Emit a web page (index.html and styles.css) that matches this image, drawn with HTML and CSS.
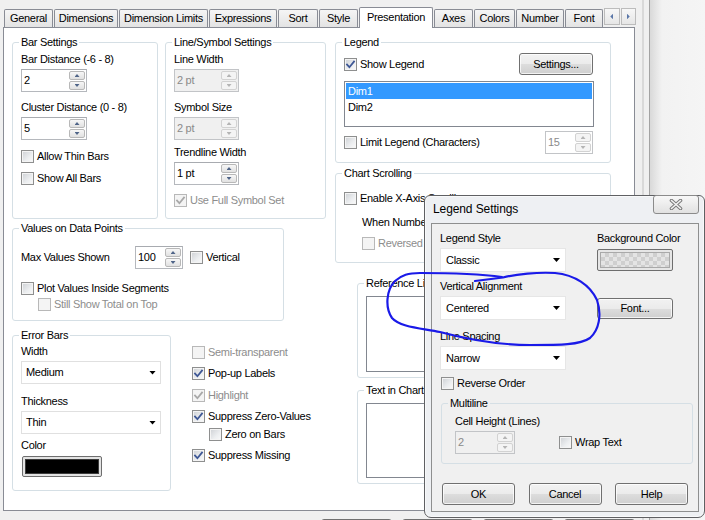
FILE: index.html
```html
<!DOCTYPE html>
<html>
<head>
<meta charset="utf-8">
<title>Chart Properties - Presentation</title>
<link rel="stylesheet" href="styles.css">
</head>
<body>
<div class="screen">
  <div class="window">
    <div class="tabs">
      <div class="tab">General</div>
      <div class="tab">Dimensions</div>
      <div class="tab">Dimension Limits</div>
      <div class="tab">Expressions</div>
      <div class="tab">Sort</div>
      <div class="tab">Style</div>
      <div class="tab sel">Presentation</div>
      <div class="tab">Axes</div>
      <div class="tab">Colors</div>
      <div class="tab">Number</div>
      <div class="tab">Font</div>
      <div class="tabscroll"><span class="ts ts-left"></span><span class="ts ts-right"></span></div>
    </div>

    <div class="panel">
      <div class="left">
        <div class="row-top">
          <div class="group g-bar">
            <div class="gt">Bar Settings</div>
            <div class="mt4">Bar Distance (-6 - 8)</div>
            <div class="spin w66 mt3"><span class="sv">2</span><span class="sb"><i class="up"></i><i class="dn"></i></span></div>
            <div class="mt9">Cluster Distance (0 - 8)</div>
            <div class="spin w66 mt3"><span class="sv">5</span><span class="sb"><i class="up"></i><i class="dn"></i></span></div>
            <div class="chk mt10"><span class="cb"></span>Allow Thin Bars</div>
            <div class="chk mt9"><span class="cb"></span>Show All Bars</div>
          </div>
          <div class="group g-line">
            <div class="gt">Line/Symbol Settings</div>
            <div class="mt4">Line Width</div>
            <div class="spin off w65 mt3"><span class="sv">2 pt</span><span class="sb"><i class="up"></i><i class="dn"></i></span></div>
            <div class="mt9">Symbol Size</div>
            <div class="spin off w65 mt3"><span class="sv">2 pt</span><span class="sb"><i class="up"></i><i class="dn"></i></span></div>
            <div class="mt6">Trendline Width</div>
            <div class="spin w65 mt3"><span class="sv">1 pt</span><span class="sb"><i class="up"></i><i class="dn"></i></span></div>
            <div class="chk dis mt9"><span class="cb on"><svg viewBox="0 0 11 11"><path d="M2 5.6 4.4 8.2 9 2.6"/></svg></span>Use Full Symbol Set</div>
          </div>
        </div>

        <div class="group g-values">
          <div class="gt">Values on Data Points</div>
          <div class="vrow">
            <span class="w114">Max Values Shown</span>
            <div class="spin w48"><span class="sv">100</span><span class="sb"><i class="up"></i><i class="dn"></i></span></div>
            <div class="chk ml7"><span class="cb"></span>Vertical</div>
          </div>
          <div class="chk mt13"><span class="cb"></span>Plot Values Inside Segments</div>
          <div class="chk dis mt3 ml17"><span class="cb"></span>Still Show Total on Top</div>
        </div>

        <div class="row-bottom">
          <div class="group g-error">
            <div class="gt">Error Bars</div>
            <div class="mt3">Width</div>
            <div class="dd w140 mt3"><span>Medium</span><span class="arr"></span></div>
            <div class="mt11">Thickness</div>
            <div class="dd w140 mt3"><span>Thin</span><span class="arr"></span></div>
            <div class="mt5">Color</div>
            <div class="swatch mt4"><span class="swatch-in"></span></div>
          </div>
          <div class="checks">
            <div class="chk dis"><span class="cb"></span>Semi-transparent</div>
            <div class="chk mt8"><span class="cb on"><svg viewBox="0 0 11 11"><path d="M2 5.6 4.4 8.2 9 2.6"/></svg></span>Pop-up Labels</div>
            <div class="chk dis mt9"><span class="cb on"><svg viewBox="0 0 11 11"><path d="M2 5.6 4.4 8.2 9 2.6"/></svg></span>Highlight</div>
            <div class="chk mt8"><span class="cb on"><svg viewBox="0 0 11 11"><path d="M2 5.6 4.4 8.2 9 2.6"/></svg></span>Suppress Zero-Values</div>
            <div class="chk mt5 ml17"><span class="cb"></span>Zero on Bars</div>
            <div class="chk mt8"><span class="cb on"><svg viewBox="0 0 11 11"><path d="M2 5.6 4.4 8.2 9 2.6"/></svg></span>Suppress Missing</div>
          </div>
        </div>
      </div>

      <div class="right">
        <div class="group g-legend">
          <div class="gt">Legend</div>
          <div class="legend-top">
            <div class="chk"><span class="cb on"><svg viewBox="0 0 11 11"><path d="M2 5.6 4.4 8.2 9 2.6"/></svg></span>Show Legend</div>
            <div class="btn btn-settings">Settings...</div>
          </div>
          <div class="list list-legend">
            <div class="li sel">Dim1</div>
            <div class="li">Dim2</div>
          </div>
          <div class="limit-row">
            <div class="chk"><span class="cb"></span>Limit Legend (Characters)</div>
            <div class="spin ro w48"><span class="sv">15</span><span class="sb"><i class="up"></i><i class="dn"></i></span></div>
          </div>
        </div>

        <div class="group g-scroll">
          <div class="gt">Chart Scrolling</div>
          <div class="chk mt12"><span class="cb"></span>Enable X-Axis Scrollbar</div>
          <div class="vrow mt6 ml18">
            <span class="w150">When Number of Items Exceeds:</span>
            <div class="spin ro w48"><span class="sv">10</span><span class="sb"><i class="up"></i><i class="dn"></i></span></div>
          </div>
          <div class="chk dis mt3 ml18"><span class="cb"></span>Reversed</div>
        </div>

        <div class="group g-ref">
          <div class="gt">Reference Lines</div>
          <div class="list list-ref"></div>
        </div>

        <div class="group g-text">
          <div class="gt">Text in Chart</div>
          <div class="list list-text"></div>
        </div>
      </div>
    </div>

    <div class="mainbtns">
      <div class="btn"></div>
      <div class="btn"></div>
      <div class="btn"></div>
      <div class="btn"></div>
    </div>
  </div>
  <div class="edge"></div>

  <div class="dlg">
    <div class="dlg-title">
      <span class="dlg-caption">Legend Settings</span>
      <span class="close"><svg width="14" height="11" viewBox="0 0 14 11"><path class="x-out" d="M2.5 1.5 11.5 9.5M11.5 1.5 2.5 9.5"/><path class="x-in" d="M2.5 1.5 11.5 9.5M11.5 1.5 2.5 9.5"/></svg></span>
    </div>
    <div class="client">
      <div class="dgrid">
        <div class="dcol">
          <div>Legend Style</div>
          <div class="dd ddl mt3"><span>Classic</span><span class="arr"></span></div>
          <div class="mt8">Vertical Alignment</div>
          <div class="dd ddl mt3"><span>Centered</span><span class="arr"></span></div>
          <div class="mt10">Line Spacing</div>
          <div class="dd ddl mt3"><span>Narrow</span><span class="arr"></span></div>
        </div>
        <div class="dcol2">
          <div>Background Color</div>
          <div class="checker mt4"><span class="checker-in"></span></div>
          <div class="btn btn-font mt27">Font...</div>
        </div>
      </div>
      <div class="chk mt7 ml1"><span class="cb"></span>Reverse Order</div>
      <div class="group g-multi">
        <div class="gt">Multiline</div>
        <div class="mt5">Cell Height (Lines)</div>
        <div class="multi-row">
          <div class="spin off w60"><span class="sv">2</span><span class="sb"><i class="up"></i><i class="dn"></i></span></div>
          <div class="chk"><span class="cb"></span>Wrap Text</div>
        </div>
      </div>
      <div class="dlg-btns">
        <div class="btn">OK</div>
        <div class="btn">Cancel</div>
        <div class="btn">Help</div>
      </div>
    </div>
  </div>

  <svg class="annot" width="705" height="520" viewBox="0 0 705 520">
    <path d="M475 281 L503 277.5 C516 274 538 272 555 273 C575 275 590 285 597 300 C602 315 599 330 590 338 C580 345 560 345 530 345 C500 345 470 340 440 332 C420 328 400 327 392 318 C385 308 386 290 395 281 C402 275 408 273 420 273 C450 273 480 274 502 277"/>
  </svg>
</div>
</body>
</html>
```

FILE: styles.css
```css
* { box-sizing: border-box; }
html, body { margin: 0; padding: 0; }
body {
  width: 705px;
  height: 520px;
  overflow: hidden;
  background: #f0f0f0;
  font-family: "Liberation Sans", Arial, sans-serif;
  font-size: 11px;
  letter-spacing: -0.3px;
  line-height: 13px;
  color: #000;
  white-space: nowrap;
}

.screen { position: relative; display: flex; width: 705px; height: 520px; overflow: hidden; }
.window { flex: none; width: 642px; padding: 7px 0 0 3px; }
.edge {
  flex: 1;
  border-left: 2px solid #d9d9d9;
  background: linear-gradient(to right, #f0f0f0 0 5px, #a3a3a3 5px 6px, #d9d9d9 6px, #f2f2f2 18px, #f5f5f5);
}

/* spacing helpers */
.mt3 { margin-top: 3px; }
.mt4 { margin-top: 4px; }
.mt5 { margin-top: 5px; }
.mt6 { margin-top: 6px; }
.mt7 { margin-top: 7px; }
.mt8 { margin-top: 8px; }
.mt9 { margin-top: 9px; }
.mt10 { margin-top: 10px; }
.mt11 { margin-top: 11px; }
.mt12 { margin-top: 12px; }
.mt13 { margin-top: 13px; }
.mt27 { margin-top: 27px; }
.ml1 { margin-left: 1px; }
.ml7 { margin-left: 7px; }
.ml17 { margin-left: 17px; }
.ml18 { margin-left: 18px; }
.w48 { width: 48px; }
.w60 { width: 60px; }
.w65 { width: 65px; }
.w66 { width: 66px; }
.w114 { width: 114px; }
.w140 { width: 140px; }
.w150 { width: 150px; }

/* tabs */
.tabs {
  display: grid;
  grid-template-columns: 50px 65px 90px 69px 41px 40px 75px 40px 42px 49px 39px 32px;
  height: 20px;
  margin-left: 1px;
  align-items: end;
}
.tab {
  height: 18px;
  margin-right: 1px;
  border: 1px solid #898c95;
  border-bottom: none;
  border-radius: 2px 2px 0 0;
  background: linear-gradient(#f5f5f5, #e3e3e3);
  text-align: center;
  line-height: 17px;
  overflow: hidden;
}
.tab.sel {
  position: relative;
  z-index: 1;
  height: 21px;
  margin-bottom: -1px;
  background: #fff;
  line-height: 19px;
}
.tabscroll { align-self: start; margin-top: 1px; display: flex; gap: 1px; height: 17px; }
.ts {
  width: 16px;
  border: 1px solid #bcbcbc;
  background: linear-gradient(#f7f7f7, #e6e6e6);
  display: flex;
  align-items: center;
  justify-content: center;
}
.ts::after { content: ""; width: 3px; height: 6px; background: #5a76a8; }
.ts-left::after { clip-path: polygon(100% 0, 100% 100%, 0 50%); }
.ts-right::after { clip-path: polygon(0 0, 100% 50%, 0 100%); }

/* main panel */
.panel {
  width: 632px;
  height: 484px;
  border: 1px solid #898c95;
  background: #fff;
  display: flex;
  gap: 9px;
  padding: 14px 0 0 8px;
}
.left { width: 314px; flex: none; display: flex; flex-direction: column; }
.right { width: 276px; flex: none; display: flex; flex-direction: column; }
.row-top { display: flex; gap: 7px; }
.row-bottom { display: flex; margin-top: 14px; }

.group {
  border: 1px solid #d5dfe5;
  border-radius: 3px;
  padding: 0 8px;
  display: flex;
  flex-direction: column;
  align-items: flex-start;
  flex: none;
}
.gt { margin: -7px 0 0 -2px; padding: 0 2px; background: #fff; line-height: 13px; }

.g-bar { width: 146px; height: 177px; }
.g-line { width: 161px; height: 177px; }
.g-values { width: 272px; height: 93px; margin-top: 9px; }
.g-error { width: 159px; height: 156px; }
.checks { margin-left: 21px; padding-top: 11px; display: flex; flex-direction: column; }

.g-legend { width: 276px; height: 121px; padding-right: 16px; }
.g-scroll { width: 276px; height: 90px; margin-top: 10px; }
.g-ref { width: 254px; height: 95px; margin-top: 20px; margin-left: 22px; }
.g-text { width: 254px; height: 94px; margin-top: 12px; margin-left: 22px; }

.legend-top {
  align-self: stretch;
  display: flex;
  justify-content: space-between;
  align-items: center;
  height: 22px;
  margin-top: 4px;
}
.btn-settings { width: 74px; height: 22px; margin-right: 1px; }
.limit-row {
  align-self: stretch;
  display: flex;
  justify-content: space-between;
  align-items: center;
  height: 23px;
  margin-top: 4px;
}
.limit-row .spin { margin-right: 1px; }

.vrow { display: flex; align-items: center; height: 23px; margin-top: 11px; }
.g-scroll .vrow { margin-top: 6px; }

/* checkbox */
.chk { display: flex; align-items: center; gap: 3px; height: 13px; }
.cb {
  flex: none;
  width: 13px;
  height: 13px;
  border: 1px solid #8e8f8f;
  background: linear-gradient(135deg, #cdd0d4 0%, #eceef0 60%, #fafafa 100%);
  box-shadow: inset 0 0 0 1px #f4f4f4;
  display: flex;
  align-items: center;
  justify-content: center;
}
.cb svg { width: 11px; height: 11px; }
.cb path { fill: none; stroke: #3e5795; stroke-width: 1.8; stroke-linecap: square; }
.dis { color: #8d8d8d; }
.dis .cb { border-color: #b8b8b8; background: #f4f4f4; box-shadow: none; }
.dis .cb path { stroke: #a8a8a8; }

/* spin edit */
.spin {
  display: flex;
  flex: none;
  height: 23px;
  border: 1px solid #b5b8bd;
  border-top-color: #a8abb0;
  background: #fff;
}
.sv { flex: 1; display: flex; align-items: center; padding-left: 2px; }
.sb { width: 17px; display: flex; flex-direction: column; gap: 1px; padding: 1px 1px 1px 0; }
.sb i {
  flex: 1;
  border: 1px solid #b8b8b8;
  border-radius: 2px;
  background: linear-gradient(#f7f7f7, #e1e1e1);
  display: flex;
  align-items: center;
  justify-content: center;
}
.sb i::after { content: ""; width: 5px; height: 3px; background: #4f6488; }
.sb .up::after { clip-path: polygon(50% 0, 100% 100%, 0 100%); }
.sb .dn::after { clip-path: polygon(0 0, 100% 0, 50% 100%); }
.spin.off { background: #f0f0f0; border-color: #c2c4c7; }
.spin.off .sv, .spin.ro .sv { color: #8a8a8a; }
.spin.off i, .spin.ro i { background: #f4f4f4; border-color: #d2d2d2; }
.spin.off i::after, .spin.ro i::after { background: #b4b4b4; }
.spin.ro { border-color: #c2c4c7; }

/* dropdown */
.dd {
  display: flex;
  align-items: center;
  justify-content: space-between;
  height: 23px;
  background: #fff;
  border: 1px solid #e0e0e0;
  padding: 0 4px;
  flex: none;
}
.arr { width: 7px; height: 4px; background: #000; clip-path: polygon(0 0, 100% 0, 50% 100%); }

/* colour swatch */
.swatch {
  width: 80px;
  height: 21px;
  margin-left: 1px;
  border: 1px solid #6e6e6e;
  border-radius: 2px;
  padding: 2px;
  background: #e3e3e3;
  display: flex;
}
.swatch-in { flex: 1; background: #000; border: 1px solid #3c3c3c; }

/* list box */
.list { align-self: stretch; border: 1px solid #828790; background: #fff; padding: 1px; }
.list-legend { height: 46px; margin-top: 6px; }
.list-ref { height: 76px; margin-top: 6px; }
.list-text { height: 75px; margin-top: 6px; }
.li { height: 16px; line-height: 16px; padding-left: 2px; }
.li.sel { background: #3399ff; color: #fff; }

/* buttons */
.btn {
  display: flex;
  align-items: center;
  justify-content: center;
  border: 1px solid #707070;
  border-radius: 3px;
  background: linear-gradient(#f2f2f2 0%, #ebebeb 50%, #dddddd 51%, #cfcfcf 100%);
  box-shadow: inset 0 0 0 1px rgba(255, 255, 255, 0.75);
}
.mainbtns { display: flex; justify-content: flex-end; gap: 10px; width: 632px; margin-top: 8px; }
.mainbtns .btn { width: 71px; height: 23px; }

/* legend settings dialog */
.dlg {
  position: absolute;
  left: 424px;
  top: 195px;
  width: 281px;
  height: 323px;
  z-index: 5;
  border: 1px solid #5f6063;
  border-radius: 6px 6px 7px 7px;
  background: #eef0f3;
  padding: 0 5px 5px 6px;
  display: flex;
  flex-direction: column;
  box-shadow: 0 0 0 1px rgba(255, 255, 255, 0.6) inset;
}
.dlg-title { height: 27px; display: flex; align-items: center; flex: none; }
.dlg-caption { margin-left: 2px; font-size: 12px; letter-spacing: -0.1px; }
.close {
  align-self: flex-start;
  margin: -1px 0 0 auto;
  width: 46px;
  height: 19px;
  border: 1px solid #8b8b8b;
  border-radius: 3px;
  background: linear-gradient(#f8f8f8, #e1e1e1);
  display: flex;
  align-items: center;
  justify-content: center;
}
.close path { fill: none; stroke-linecap: round; }
.close .x-out { stroke: #7a7a7a; stroke-width: 3.6; }
.close .x-in { stroke: #f2f2f2; stroke-width: 1.6; }

.client {
  flex: 1;
  border: 1px solid #8e8f8f;
  background: #f0f0f0;
  padding: 8px 0 0 8px;
  display: flex;
  flex-direction: column;
  align-items: flex-start;
}
.client .gt { background: #f0f0f0; }
.dgrid { display: flex; gap: 31px; }
.dcol { width: 126px; display: flex; flex-direction: column; }
.dcol2 { width: 76px; display: flex; flex-direction: column; }
.ddl { width: 126px; height: 24px; padding: 0 5px; border-color: #e6e6e6; }
.checker {
  width: 76px;
  height: 22px;
  border: 1px solid #6e6e6e;
  border-radius: 2px;
  padding: 2px;
  background: #e6e6e6;
  display: flex;
}
.checker-in {
  flex: 1;
  border: 1px solid #a9a9a9;
  background: repeating-conic-gradient(#cfcfcf 0 25%, #e4e4e4 0 50%) 0 0 / 8px 8px;
}
.btn-font { width: 76px; height: 21px; }

.g-multi { width: 252px; height: 61px; margin: 13px 0 0 1px; padding: 0 8px 0 13px; }
.g-multi .gt { margin-left: -7px; }
.multi-row { display: flex; align-items: center; gap: 44px; margin-top: 3px; }

.dlg-btns { width: 246px; margin: 19px 0 0 2px; display: flex; justify-content: space-between; }
.dlg-btns .btn { width: 73px; height: 22px; }

/* hand-drawn annotation */
.annot { position: absolute; left: 0; top: 0; z-index: 10; pointer-events: none; }
.annot path { fill: none; stroke: #1a1ae8; stroke-width: 2.2; stroke-linecap: round; stroke-linejoin: round; }
```
